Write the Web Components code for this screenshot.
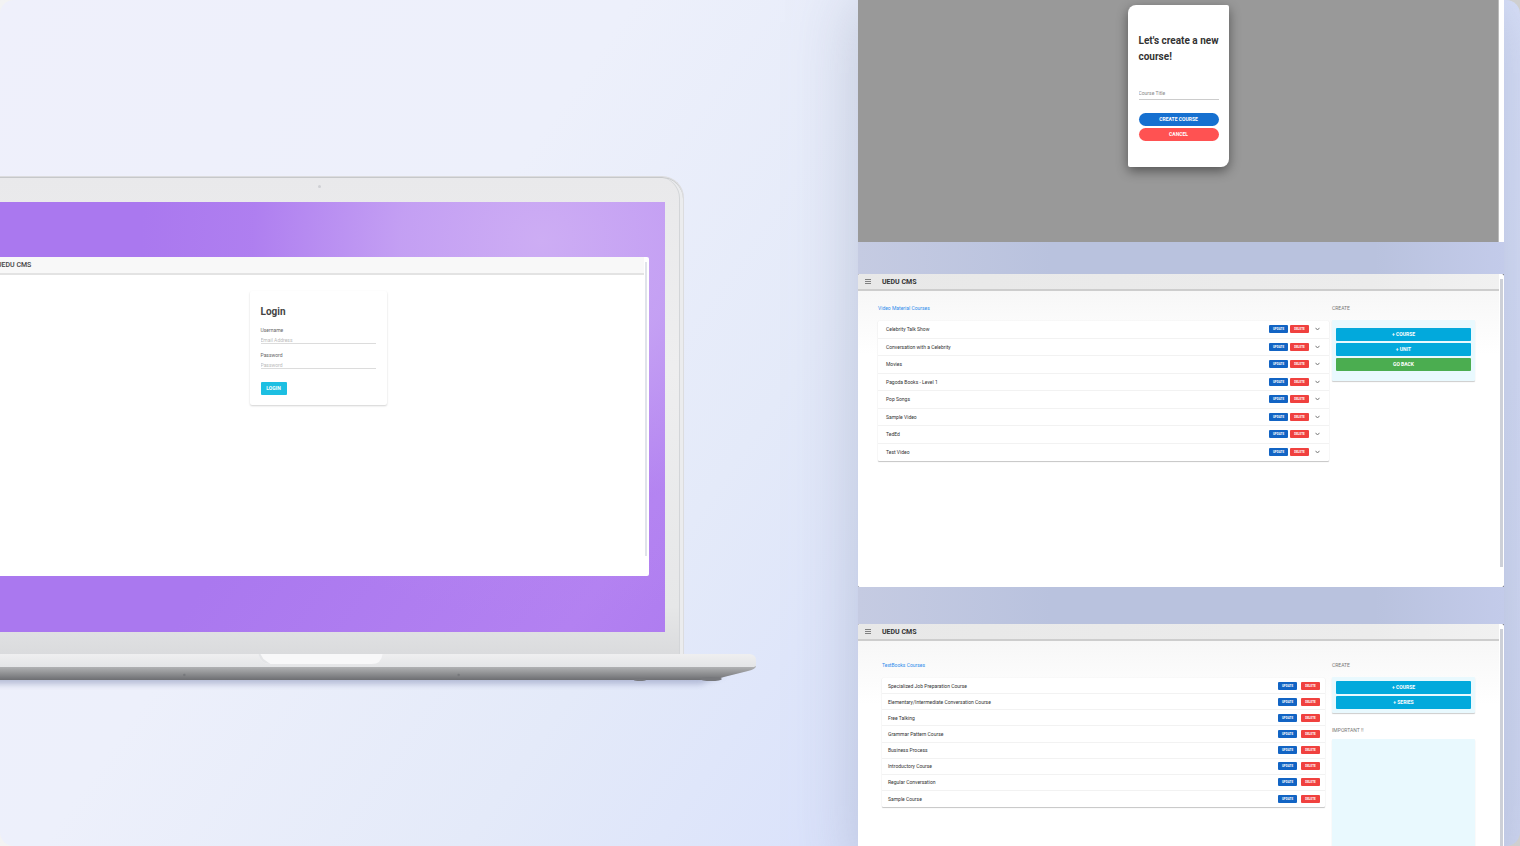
<!DOCTYPE html>
<html lang="en">
<head>
<meta charset="utf-8">
<meta name="viewport" content="width=device-width, initial-scale=1">
<title>UEDU CMS</title>
<style>
html{background:linear-gradient(90deg,#f3f3f3,#cfcfcf)}
body{margin:0;font-family:Roboto,"Liberation Sans",sans-serif;font-size:5px;line-height:8px;color:#333}
</style>
</head>
<body>
<show-case>
  <laptop-mockup slot="device">
    <app-window plain heading="UEDU CMS"><login-form></login-form></app-window>
  </laptop-mockup>
  <course-dialog></course-dialog>
  <app-window menu heading="UEDU CMS">
    <course-page variant="video" heading="Video Material Courses"
      items="Celebrity Talk Show|Conversation with a Celebrity|Movies|Pagoda Books - Level 1|Pop Songs|Sample Video|TedEd|Test Video">
      <action-card heading="CREATE" actions="+ COURSE|+ UNIT|GO BACK"></action-card>
    </course-page>
  </app-window>
  <app-window menu heading="UEDU CMS">
    <course-page variant="text" heading="TextBooks Courses"
      items="Specialized Job Preparation Course|Elementary/Intermediate Conversation Course|Free Talking|Grammar Pattern Course|Business Process|Introductory Course|Regular Conversation|Sample Course">
      <action-card compact heading="CREATE" actions="+ COURSE|+ SERIES"></action-card>
      <action-card notice heading="IMPORTANT !!"></action-card>
    </course-page>
  </app-window>
</show-case>
<script>
class Base extends HTMLElement {
  connectedCallback() {
    if (this.shadowRoot) return;
    this.attachShadow({ mode: "open" }).innerHTML = `<style>*{box-sizing:border-box}${this.css()}</style>${this.html()}`;
  }
  get heading() { return this.getAttribute("heading") || ""; }
  list(name) { const v = this.getAttribute(name); return v ? v.split("|") : []; }
}

customElements.define("show-case", class extends Base {
  css() { return `
    :host{display:grid;grid-template-columns:minmax(0,858fr) minmax(0,646fr);padding-right:16px;box-sizing:border-box;height:100vh;overflow:hidden;border-radius:14px;
      background:linear-gradient(125deg,#eff0fb 0%,#edf0fb 30%,#e4eaf9 50%,#dae2fb 68%,#d0d8f3 100%)}
    .device{padding-top:176px;min-width:0}
    .screens{display:grid;grid-template-rows:242px 313px 260px;row-gap:32px;align-content:start;min-width:0;
      background:linear-gradient(90deg,#c5cbe2,#b9c2de 30%,#b9c2de 80%,#c3cbea);box-shadow:0 0 64px rgba(120,130,160,.36)}
    ::slotted(app-window:last-of-type){margin-top:5px}`; }
  html() { return `<div class="device"><slot name="device"></slot></div><main class="screens"><slot></slot></main>`; }
});

customElements.define("laptop-mockup", class extends Base {
  css() { return `
    :host{display:block;margin-left:-115px;margin-right:102px}
    .lid{margin:0 72px;padding:25px 18px 22px;border:1px solid #dcdcde;border-bottom:0;border-radius:22px 22px 0 0;
      background:linear-gradient(180deg,#e9e9eb 0,#eeeeef 40%,#e6e7e8 90%,#dadbdd 100%);
      box-shadow:inset 0 1px 0 #c6c8ca,inset -3px 0 0 #ebecee,inset -4px 0 0 #d3d5d8;position:relative}
    .cam{position:absolute;left:50%;top:8px;width:3px;height:3px;margin-left:-3px;border-radius:50%;background:#cfd0d4}
    .screen{height:430px;padding:55px 16px;background:
      radial-gradient(ellipse 400px 380px at 82% 9%,#cdadf4 0,rgba(200,166,244,.85) 35%,rgba(182,137,241,.4) 72%,rgba(172,121,239,0) 100%),
      linear-gradient(125deg,#aa78ef 50%,#b381f1 90%,#af7df0)}
    svg{display:block;width:100%;height:36px}`; }
  html() { return `
    <div class="lid"><span class="cam"></span><div class="screen"><slot></slot></div></div>
    <svg viewBox="0 0 870 36" preserveAspectRatio="none" aria-hidden="true">
      <defs>
        <linearGradient id="u" x2="0" y2="1"><stop offset="0" stop-color="#b6b7b9"/><stop offset=".5" stop-color="#929395"/><stop offset="1" stop-color="#6d6e72"/></linearGradient>
        <linearGradient id="t" x2="0" y2="1"><stop offset="0" stop-color="#efeff0"/><stop offset="1" stop-color="#e4e5e7"/></linearGradient>
        <filter id="s" x="-5%" y="-100%" width="110%" height="300%"><feGaussianBlur stdDeviation="3"/></filter>
      </defs>
      <path d="M30 20H840L815 30H50Z" fill="#8f97bb" opacity=".6" filter="url(#s)"/>
      <path d="M0 12H870Q870 15 862 17L838 23 828 26H42L32 23 8 17Q0 15 0 12Z" fill="url(#u)"/>
      <ellipse cx="825" cy="25" rx="11" ry="2" fill="#77787c"/><ellipse cx="754" cy="26" rx="6" ry="1" fill="#77787c"/>
      <circle cx="299" cy="21" r="1.200" fill="#77787c"/><circle cx="573" cy="21" r="1.200" fill="#77787c"/>
      <path d="M0 0H864Q870 1 870 6V11Q870 13 866 13H4Q0 13 0 11Z" fill="url(#t)"/>
      <path d="M373 0H497Q496 10 486 10H385Q375 10 373 0Z" fill="#f8f8f9"/>
      <path d="M373 0Q375 10 385 10L378 5 375 0Z" fill="#e4e5e7"/>
    </svg>`; }
});

customElements.define("app-window", class extends Base {
  css() { return `
    :host{display:block;background:#4a4f60;min-width:0;height:100%}
    :host([plain]){background:none;height:319px}
    .win{height:100%;border-radius:2px;overflow:hidden;display:grid;grid-template-columns:minmax(0,1fr) 5px;background:#fff}
    .page{background:linear-gradient(180deg,#f7f7f7 17px,#fff 80px)}
    header{display:flex;align-items:center;gap:11px;height:17px;padding-left:7px;border-bottom:2px solid #cdcdcd;background:linear-gradient(90deg,#e8e8e8,#ececec 80%,#f1f1f1)}
    h1{margin:0;font-size:7px;line-height:10px;font-weight:700;color:#333}
    button{border:0;padding:0;background:none;width:6px;height:6px;display:block}
    svg{display:block;width:6px;height:6px}
    .bar{margin:5px 1px 20px 1px;background:#cdd0d8;width:3px}
    :host([plain]) header{height:18px;background:#f8f8f8;border-color:#e3e3e3;padding-left:5px}
    :host([plain]) h1{font-weight:500;color:#444}
    :host([plain]) .page{background:#fff}
    :host([plain]) .bar{background:#e0e3ea;width:2px}`; }
  html() { return `<section class="win"><div class="page"><header>${this.hasAttribute("menu") ? `<button aria-label="Menu"><svg viewBox="0 0 6 6"><path d="M0 .5H6M0 2.500H6M0 4.500H6" stroke="#808080"/></svg></button>` : ""}<h1>${this.heading}</h1></header><slot></slot></div><div class="bar"></div></section>`; }
});

customElements.define("login-form", class extends Base {
  css() { return `
    :host{display:block;width:137px;margin:16px auto 0}
    form{padding:13px 11px 10px;background:#fff;border-radius:2px;box-shadow:0 1px 2px rgba(0,0,0,.18)}
    h2{margin:0 0 6px;font-size:10px;line-height:16px;font-weight:700;color:#444}
    label{display:block;color:#666;line-height:8px}
    input{display:block;width:100%;height:9px;margin:1px 0 7px;padding:2px 0 0;border:0;border-bottom:1px solid #dcdcdc;background:none;font:inherit;line-height:6px;outline:0}
    input::placeholder{color:#bbb;opacity:1}
    button{display:block;margin-top:13px;width:26px;height:13px;border:0;border-radius:1px;padding:0;background:#1dbfe2;color:#fff;font:700 5px/13px Roboto,sans-serif}`; }
  html() { return `<form><h2>Login</h2><label for="u">Username</label><input id="u" placeholder="Email Address"><label for="p">Password</label><input id="p" type="password" placeholder="Password"><button type="button">LOGIN</button></form>`; }
});

customElements.define("course-dialog", class extends Base {
  css() { return `
    :host{display:grid;grid-template-columns:minmax(0,1fr) 5px;background:#fff}
    .shade{background:#999;padding-top:5px;border-right:1px solid #bbb}
    form{width:101px;height:162px;margin:0 auto;padding:28px 9px 0 11px;background:#fff;border-radius:8px 2px 8px 2px;box-shadow:0 4px 12px rgba(0,0,0,.45)}
    h2{margin:0 0 23px;font-size:10px;line-height:16px;font-weight:700;color:#333;white-space:nowrap}
    input{display:block;width:80px;height:12px;margin:0 0 13px;padding:0 0 1px;border:0;border-bottom:1px solid #ccc;font:inherit;outline:0;background:none}
    input::placeholder{color:#888;opacity:1}
    button{display:block;width:80px;height:13px;margin-bottom:2px;border:0;border-radius:7px;padding:0;background:#1670d0;color:#fff;font:700 5px/13px Roboto,sans-serif}
    button+button{background:#ff5252}`; }
  html() { return `<div class="shade"><form><h2>Let's create a new<br>course!</h2><input placeholder="Course Title" aria-label="Course Title"><button type="button">CREATE COURSE</button><button type="button">CANCEL</button></form></div>`; }
});

customElements.define("course-page", class extends Base {
  css() { return `
    :host{display:grid;grid-template-columns:minmax(0,1fr) 143px;column-gap:3px;padding:13px 24px 0 20px}
    :host([variant=text]){column-gap:7px;padding:20px 24px 0 24px}
    a{display:block;line-height:8px;color:#2f8cec;text-decoration:none}
    ul{list-style:none;margin:9px 0 0;padding:0;display:grid;grid-template-rows:repeat(8,1fr);height:140px;background:#fff;border-radius:1px;box-shadow:0 1px 1px rgba(0,0,0,.22),0 0 1px rgba(0,0,0,.12)}
    li{display:flex;align-items:center;gap:2px;padding:0 9px 0 8px;border-bottom:1px solid #f2f2f2;min-height:0}
    li:last-child{border:0}
    span{flex:1;color:#333}
    button{width:19px;height:8px;border:0;border-radius:1px;padding:0;background:#1264c4;color:#fff;font:700 3px/8px Roboto,sans-serif;text-align:center}
    .del{background:#f0413f}
    svg{width:5px;height:4px;margin-left:4px}
    :host([variant=text]) ul{height:129px}
    :host([variant=text]) li{gap:4px;padding:0 5px 0 6px}`; }
  html() {
    const chev = this.getAttribute("variant") === "video" ? `<svg viewBox="0 0 5 4" aria-hidden="true"><path d="M.5 .8L2.500 3L4.500 .8" fill="none" stroke="#777"/></svg>` : "";
    return `<div><a href="#">${this.heading}</a><ul>${this.list("items").map(t => `<li><span>${t}</span><button>UPDATE</button><button class="del">DELETE</button>${chev}</li>`).join("")}</ul></div><aside><slot></slot></aside>`;
  }
});

customElements.define("action-card", class extends Base {
  css() { return `
    :host{display:block}
    h2{margin:0 0 8px;font-size:5px;line-height:8px;font-weight:400;color:#777}
    .card{display:grid;gap:2px;padding:8px 4px 10px;background:#e9f9fe;border-radius:1px;box-shadow:0 1px 1px rgba(0,0,0,.2)}
    :host([compact]) .card{padding:4px}
    :host([notice]){margin-top:13px}
    :host([notice]) h2{margin-bottom:5px}
    :host([notice]) .card{height:120px}
    button{height:13px;border:0;border-radius:1px;padding:0;background:#02a9dc;color:#fff;font:700 5px/13px Roboto,sans-serif}
    button:nth-child(3){background:#4bad50}`; }
  html() { return `<h2>${this.heading}</h2><div class="card">${this.list("actions").map(t => `<button>${t}</button>`).join("")}</div>`; }
});
</script>
</body>
</html>
